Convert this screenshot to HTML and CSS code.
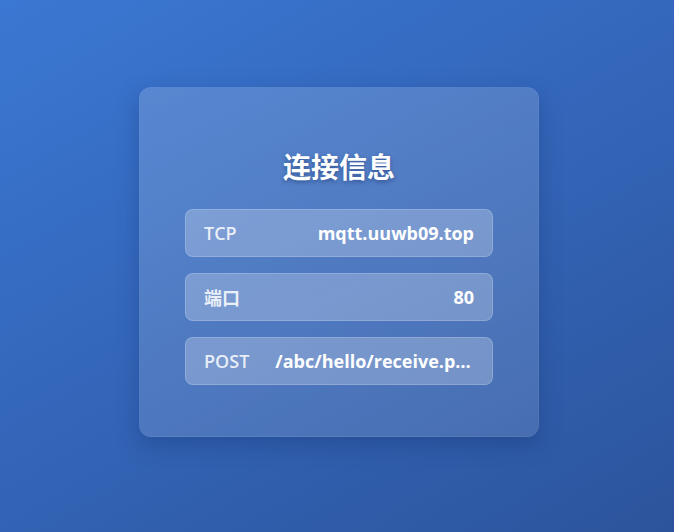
FILE: index.html
```html
<!DOCTYPE html>
<html lang="zh-CN">
<head>
<meta charset="UTF-8" />
<meta name="viewport" content="width=device-width, initial-scale=1" />
<title>连接信息</title>
<link rel="stylesheet" href="styles.css">
</head>
<body>
<main class="card">
  <h2 class="card-title">连接信息</h2>

  <div class="info-row">
    <span class="info-label">TCP</span>
    <span class="info-value">mqtt.uuwb09.top</span>
  </div>

  <div class="info-row">
    <span class="info-label">端口</span>
    <span class="info-value">80</span>
  </div>

  <div class="info-row">
    <span class="info-label">POST</span>
    <span class="info-value">/abc/hello/receive.php</span>
  </div>
</main>
</body>
</html>
```

FILE: styles.css
```css
html, body {
  height: 100%;
}
body {
  margin: 0;
  font-family: "Open Sans", "Noto Sans CJK SC", sans-serif;
  background: linear-gradient(150deg, #3b78d3 0%, #3365b8 50%, #2c549c 100%);
  display: flex;
  align-items: center;
  justify-content: center;
  padding-bottom: 8px;
  box-sizing: border-box;
}
.card {
  width: 400px;
  height: 350px;
  box-sizing: border-box;
  padding: 60px 45px 0;
  margin-left: 4px;
  border-radius: 12px;
  background: linear-gradient(160deg, rgba(255,255,255,0.16), rgba(255,255,255,0.12));
  border: 1px solid rgba(255,255,255,0.04);
  box-shadow: 0 8px 22px rgba(20, 50, 110, 0.35);
  display: flex;
  flex-direction: column;
  gap: 16px;
}
.card-title {
  margin: 0 0 7px;
  text-align: center;
  font-size: 28px;
  font-weight: bold;
  color: #fff;
  line-height: 38px;
  text-shadow: 0 2px 4px rgba(20, 40, 90, 0.45);
}
.info-row {
  height: 48px;
  box-sizing: border-box;
  display: flex;
  align-items: center;
  gap: 26px;
  padding: 0 18px;
  border-radius: 8px;
  background: rgba(255,255,255,0.24);
  border: 1.5px solid rgba(255,255,255,0.18);
}
.info-label {
  flex-shrink: 0;
  font-size: 18px;
  font-weight: 600;
  color: rgba(255,255,255,0.85);
}
.info-value {
  flex: 1;
  min-width: 0;
  text-align: right;
  font-size: 18px;
  font-weight: bold;
  color: #fff;
  white-space: nowrap;
  overflow: hidden;
  text-overflow: ellipsis;
}
```
